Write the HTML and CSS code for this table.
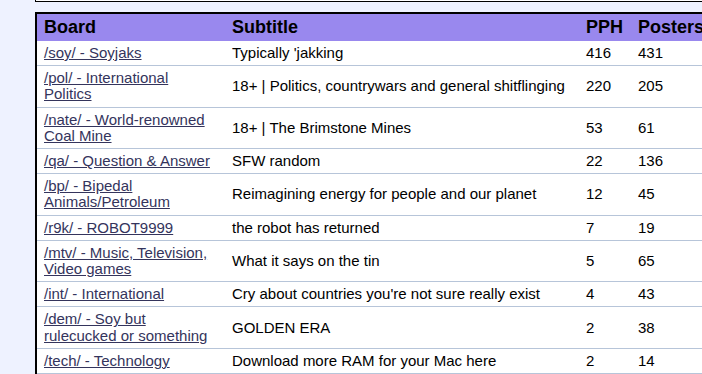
FILE: index.html
```html
<!DOCTYPE html>
<html>
<head>
<meta charset="utf-8">
<link rel="stylesheet" href="styles.css">
</head>
<body>
<div class="page">
  <div class="prev-box"></div>
  <table class="boards">
    <colgroup>
      <col class="c-board"><col class="c-sub"><col class="c-pph"><col class="c-posters">
    </colgroup>
    <thead>
      <tr><th>Board</th><th>Subtitle</th><th>PPH</th><th>Posters</th></tr>
    </thead>
    <tbody>
      <tr><td><a href="#">/soy/ - Soyjaks</a></td><td>Typically 'jakking</td><td>416</td><td>431</td></tr>
      <tr><td><a href="#">/pol/ - International Politics</a></td><td>18+ | Politics, countrywars and general shitflinging</td><td>220</td><td>205</td></tr>
      <tr><td><a href="#">/nate/ - World-renowned Coal Mine</a></td><td>18+ | The Brimstone Mines</td><td>53</td><td>61</td></tr>
      <tr><td><a href="#">/qa/ - Question &amp; Answer</a></td><td>SFW random</td><td>22</td><td>136</td></tr>
      <tr><td><a href="#">/bp/ - Bipedal Animals/Petroleum</a></td><td>Reimagining energy for people and our planet</td><td>12</td><td>45</td></tr>
      <tr><td><a href="#">/r9k/ - ROBOT9999</a></td><td>the robot has returned</td><td>7</td><td>19</td></tr>
      <tr><td><a href="#">/mtv/ - Music, Television, Video games</a></td><td>What it says on the tin</td><td>5</td><td>65</td></tr>
      <tr><td><a href="#">/int/ - International</a></td><td>Cry about countries you're not sure really exist</td><td>4</td><td>43</td></tr>
      <tr><td><a href="#">/dem/ - Soy but<br>rulecucked or something</a></td><td>GOLDEN ERA</td><td>2</td><td>38</td></tr>
      <tr><td><a href="#">/tech/ - Technology</a></td><td>Download more RAM for your Mac here</td><td>2</td><td>14</td></tr>
      <tr class="more"><td></td><td></td><td></td><td></td></tr>
    </tbody>
  </table>
</div>
</body>
</html>
```

FILE: styles.css
```css
html, body {
  margin: 0;
  padding: 0;
  background: #eef2ff;
  overflow: hidden;
}
body {
  font-family: "Liberation Sans", Arial, sans-serif;
  font-size: 15px;
  color: #000;
}
.page {
  padding-left: 35px;
  width: 760px;
}
.prev-box {
  height: 1px;
  border: 1px solid #000;
  border-top: none;
  background: #fff;
  margin-bottom: 10px;
}
.boards {
  border-collapse: collapse;
  border: 2px solid #000;
  table-layout: fixed;
  width: 720px;
  background: #fff;
}
.c-board { width: 189px; }
.c-sub { width: 354px; }
.c-pph { width: 52px; }
.c-posters { width: 125px; }
.boards th {
  background: #9988ee;
  text-align: left;
  font-size: 18px;
  font-weight: bold;
  padding: 3px 7px;
  line-height: 21px;
}
.boards td {
  padding: 4px 7px;
  line-height: 16.2px;
  border-bottom: 1px solid #b7c5d9;
}
.boards .more td {
  height: 16px;
}
.boards a {
  color: #34345c;
  text-decoration: underline;
}
```
